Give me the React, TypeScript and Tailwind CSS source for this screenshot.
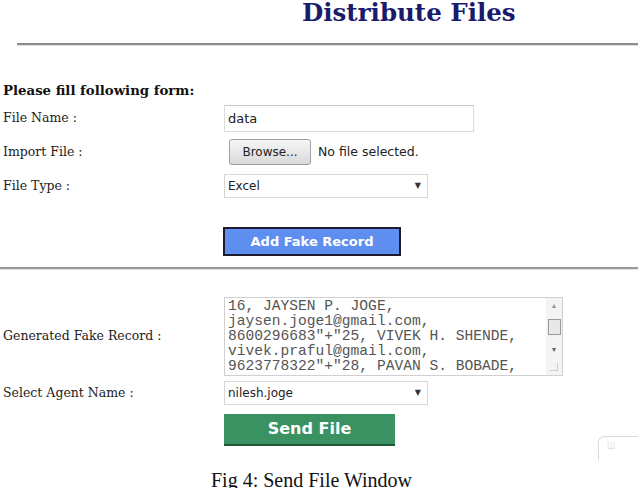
import React from "react";

const SERIF = "font-['DejaVu_Serif',serif]";
const CAPTION = "font-['Liberation_Serif',serif]";
const SANS = "font-['DejaVu_Sans',sans-serif]";

const RECORD_LINES = [
  "16, JAYSEN P. JOGE,",
  "jaysen.joge1@gmail.com,",
  '8600296683"+"25, VIVEK H. SHENDE,',
  "vivek.praful@gmail.com,",
  '9623778322"+"28, PAVAN S. BOBADE,',
];

function Row({ label, children, className = "" }: { label: string; children: React.ReactNode; className?: string }) {
  return (
    <div className={`flex items-center ${className}`}>
      <div className={`w-[224px] shrink-0 pl-[3px] text-[12.5px] text-[#222] ${SERIF}`}>{label}</div>
      {children}
    </div>
  );
}

function SelectBox({ value, width }: { value: string; width: string }) {
  return (
    <div
      className={`flex h-[24px] items-center justify-between border border-[#d6d6d6] bg-white pl-[3px] pr-[6px] text-[12px] text-[#222] ${SANS} ${width}`}
    >
      <span>{value}</span>
      <span className="text-[8px] text-[#333]">▼</span>
    </div>
  );
}

function ScrollTrack() {
  return (
    <div className="flex w-[16px] shrink-0 flex-col items-center justify-between bg-[#f4f4f4] py-[4px]">
      <span className="text-[7px] leading-none text-[#999]">▲</span>
      <div className="h-[16px] w-[13px] border border-[#999] bg-[#e8e8e8]" />
      <span className="text-[7px] leading-none text-[#666]">▼</span>
      <div className="h-[8px] w-[8px] border-b border-r border-[#ccc]" />
    </div>
  );
}

export default function App() {
  return (
    <div className="h-[488px] w-[638px] overflow-hidden bg-white">
      <h1 className={`pt-[1px] pl-[302px] text-[24.5px] font-bold leading-[24px] text-[#1b1b6b] ${SERIF}`}>
        Distribute Files
      </h1>

      <div className="ml-[17px] mt-[18px] h-[3px] border-t-2 border-[#8c8c8c] bg-[#dedede]" />

      <p className={`mt-[35px] pl-[3px] text-[13.3px] font-bold text-[#111] ${SERIF}`}>Please fill following form:</p>

      <Row label="File Name :" className="mt-[4px]">
        <div className={`flex h-[27px] w-[250px] items-center border border-[#dcdcdc] border-t-[#c8c8c8] pl-[3px] text-[13px] text-[#222] ${SANS}`}>
          data
        </div>
      </Row>

      <Row label="Import File :" className="mt-[7px]">
        <div className="flex items-center gap-[7px] pl-[5px]">
          <div
            className={`flex h-[26px] w-[82px] items-center justify-center rounded-[3px] border border-[#a0a0a0] bg-gradient-to-b from-[#f6f6f6] to-[#d9d9d9] text-[12px] text-[#222] ${SANS}`}
          >
            Browse...
          </div>
          <span className={`text-[12.5px] text-[#222] ${SANS}`}>No file selected.</span>
        </div>
      </Row>

      <Row label="File Type :" className="mt-[9px]">
        <SelectBox value="Excel" width="w-[204px]" />
      </Row>

      <div className="mt-[29px] pl-[223px]">
        <button
          className={`h-[29px] w-[178px] border-2 border-[#1c1c2c] bg-[#5d8ef0] text-[13px] font-bold text-white ${SANS}`}
        >
          Add Fake Record
        </button>
      </div>

      <div className="mt-[11px] h-[3px] border-t-2 border-[#9a9a9a] bg-[#e2e2e2]" />

      <Row label="Generated Fake Record :" className="mt-[27px]">
        <div className="flex h-[79px] w-[339px] border border-[#d0d0d0] bg-white">
          <div className="flex-1 overflow-hidden pl-[3px] pt-[1px] font-['Liberation_Mono',monospace] text-[14.6px] leading-[15px] text-[#555]">
            {RECORD_LINES.map((line) => (
              <div key={line} className="whitespace-pre">
                {line}
              </div>
            ))}
          </div>
          <ScrollTrack />
        </div>
      </Row>

      <Row label="Select Agent Name :" className="mt-[5px]">
        <SelectBox value="nilesh.joge" width="w-[204px]" />
      </Row>

      <div className="mt-[9px] flex items-end justify-between">
        <button
          className={`ml-[224px] h-[32px] w-[171px] border-b-2 border-[#1e5a38] bg-[#3a9262] text-[16px] font-bold text-white ${SANS}`}
        >
          Send File
        </button>
        <div className="mb-[-14px] h-[24px] w-[40px] rounded-tl-[6px] border-l border-t border-[#dadada] pl-[8px] pt-[3px] text-[8px] text-[#ddd]">
          Ш
        </div>
      </div>

      <p className={`mt-[24px] pl-[211px] text-[20px] leading-[20px] text-[#111] ${CAPTION}`}>Fig 4: Send File Window</p>
    </div>
  );
}
